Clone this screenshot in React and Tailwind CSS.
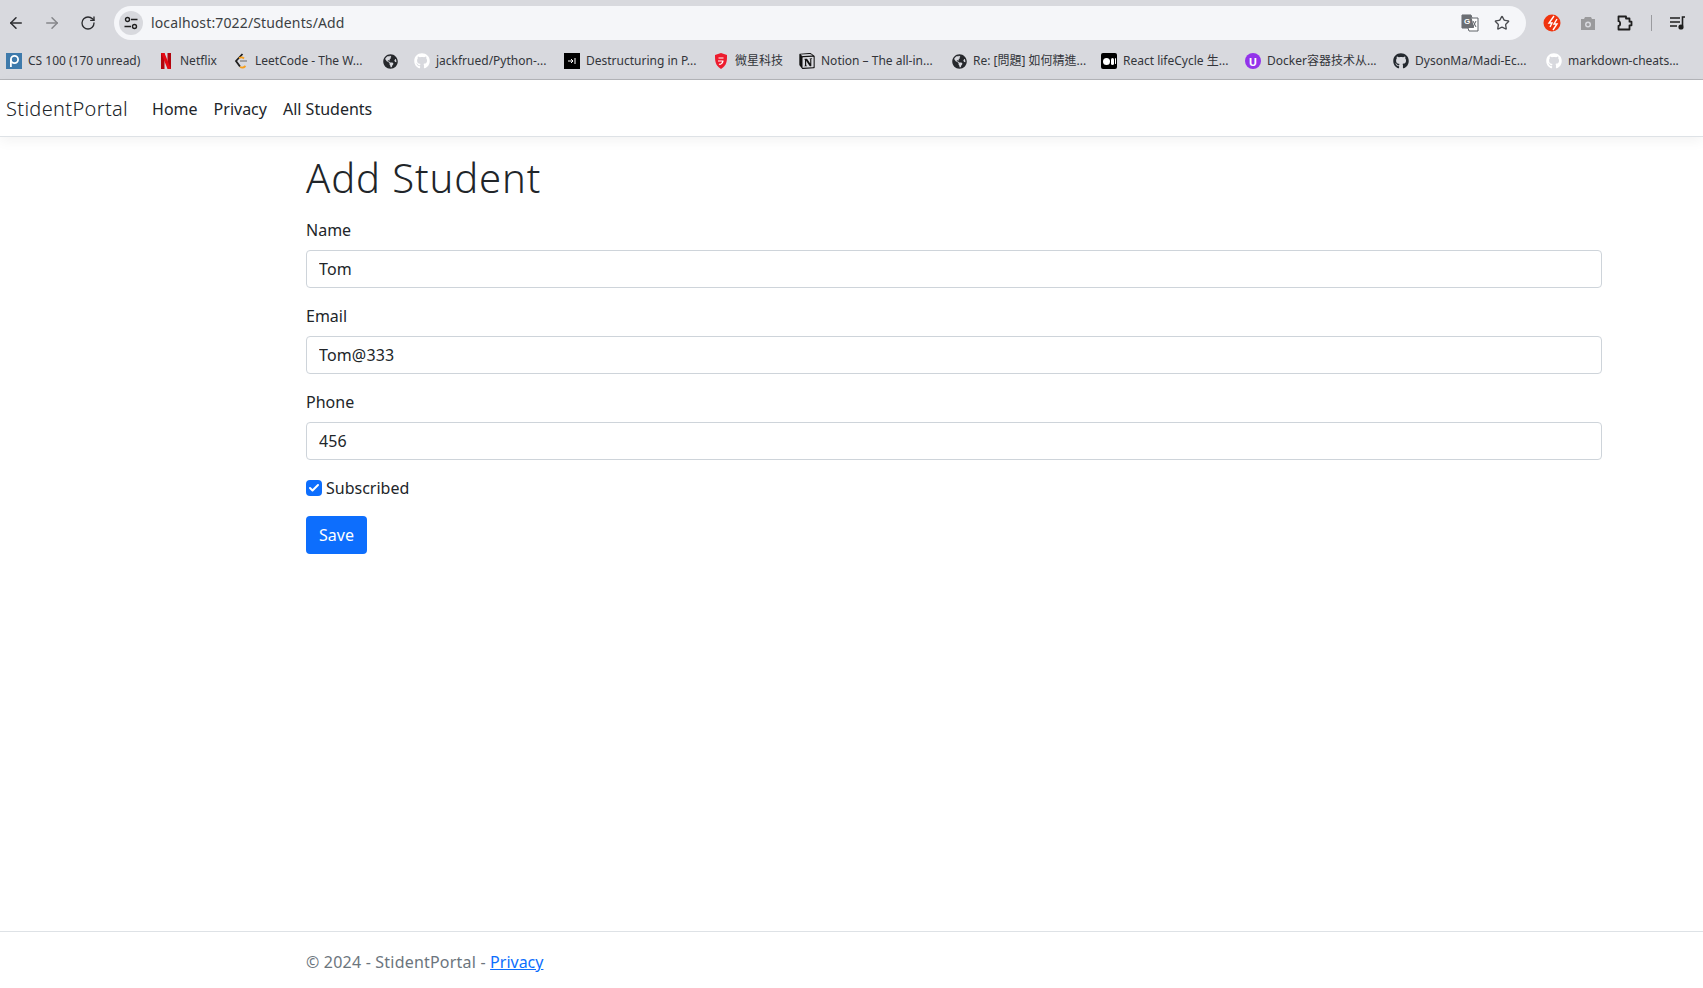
import React from "react";
import { ArrowLeft, ArrowRight, Check, RotateCw, Star } from "lucide-react";
import { FaGithub, FaGlobeAmericas } from "react-icons/fa";
import { SiNotion } from "react-icons/si";

const Tune = () => (
	<svg width="14" height="14" viewBox="0 0 14 14" fill="none" stroke="#1f1f1f" strokeWidth="1.4">
		<circle cx="3.5" cy="3.5" r="2" />
		<path d="M7 3.5h6.5M.5 10.5H7" />
		<circle cx="10.5" cy="10.5" r="2" />
	</svg>
);

const Translate = () => (
	<svg width="18" height="18" viewBox="0 0 18 18">
		<path d="M1 1h9l1 3h6v13H8l-1-3H1z" fill="#fff" stroke="#5f6368" />
		<path d="M1 1h9l3 13H1z" fill="#6b6e73" />
		<text x="3" y="10" fontSize="8" fontWeight="700" fill="#fff" fontFamily="Liberation Sans, sans-serif">G</text>
		<path d="M12 7l3 6M15 7l-3 6" stroke="#5f6368" strokeWidth="1" />
	</svg>
);

const Flash = () => (
	<svg width="18" height="18" viewBox="0 0 18 18">
		<circle cx="9" cy="9" r="8.5" fill="#f0340e" />
		<path d="M11 2 6 9h3l-2 4M14 5l-3 5h3l-4 6" fill="none" stroke="#fff" strokeWidth="1.4" />
	</svg>
);

const CameraIcon = () => (
	<svg width="16" height="15" viewBox="0 0 16 15">
		<path d="M1 3h3l1-2h6l1 2h3v11H1z" fill="#9a9a9c" />
		<circle cx="8" cy="8.5" r="3" fill="#d8d9de" />
		<circle cx="8" cy="8.5" r="1.5" fill="#9a9a9c" />
	</svg>
);

const Extension = () => (
	<svg width="18" height="18" viewBox="0 0 18 18" fill="none" stroke="#1f1f1f" strokeWidth="1.8" strokeLinejoin="round">
		<path d="M2.500 2.500H10v2h3.500v3.200h2v3.600h-2V15.500H2.500v-3.700c2.200 0 2.200-4.600 0-4.600z" />
	</svg>
);

const Media = () => (
	<svg width="16" height="14" viewBox="0 0 16 14" fill="none" stroke="#1f1f1f" strokeWidth="1.6">
		<path d="M0 2h10M0 6h10M0 10h7M15 1h-2.5v9" />
		<circle cx="11" cy="11" r="1.8" fill="#1f1f1f" />
	</svg>
);

const Piazza = () => (
	<svg width="16" height="16" viewBox="0 0 16 16">
		<rect width="16" height="16" fill="#3e7aab" />
		<circle cx="8.500" cy="6.500" r="3.600" fill="none" stroke="#fff" strokeWidth="1.800" />
		<path d="M4.900 6.500V14" stroke="#fff" strokeWidth="1.800" />
	</svg>
);

const Netflix = () => (
	<svg width="16" height="16" viewBox="0 0 16 16">
		<path d="M3 0h3.5v16L3 16z" fill="#b1060f" />
		<path d="M9.5 0H13v16l-3.500-.3z" fill="#b1060f" />
		<path d="M3 0h3.500L13 16l-3.500-.3z" fill="#e50914" />
	</svg>
);

const Leetcode = () => (
	<svg width="16" height="16" viewBox="0 0 16 16" fill="none" strokeWidth="1.8">
		<path d="M9.500 1 3 8l4 5.500" stroke="#1f1f1f" />
		<path d="M7 8h7" stroke="#9a9a9c" />
		<path d="M7 14c2 1 4 .5 5.500-1" stroke="#f89f1b" />
		<path d="M6 5c2-1 3.500-1 5 .5" stroke="#f89f1b" />
	</svg>
);

const Vercel = () => (
	<span className="flex h-4 w-4 items-center justify-center bg-black">
		<svg width="8" height="6" viewBox="0 0 8 6" fill="none" stroke="#fff">
			<path d="M0 3h4M3 1l2 2-2 2M7 0v6" />
		</svg>
	</span>
);

const Msi = () => (
	<svg width="16" height="16" viewBox="0 0 16 16">
		<path d="M2 2 8 0l6 2c0 6 0 10-6 14C2 12 2 8 2 2z" fill="#ed1c2e" />
		<path d="M5.500 5h5M5 8h5.500M6 11c2 1 3.500-1 4-3" fill="none" stroke="#fff" strokeWidth="1.200" />
	</svg>
);

const Medium = () => (
	<span className="flex h-4 w-4 items-center justify-center gap-px rounded-[2px] bg-black">
		<span className="h-[7px] w-[7px] rounded-full bg-white" />
		<span className="h-[7px] w-[3px] rounded-full bg-white" />
		<span className="h-[6px] w-px rounded-full bg-white" />
	</span>
);

const Uu = () => (
	<span className="flex h-4 w-4 items-center justify-center rounded-full bg-[#9333ea] text-[11px] font-bold leading-none text-white">U</span>
);

const GithubLight = () => <FaGithub size={16} color="#ffffff" />;
const GithubDark = () => <FaGithub size={16} color="#24292f" />;
const Globe = () => <FaGlobeAmericas size={15} color="#26282c" />;
const NotionIcon = () => <SiNotion size={16} color="#111111" />;

const bookmarks = [
	{ icon: <Piazza />, text: "CS 100 (170 unread)", width: "w-[152px]" },
	{ icon: <Netflix />, text: "Netflix", width: "w-[75px]" },
	{ icon: <Leetcode />, text: "LeetCode - The W...", width: "w-[149px]" },
	{ icon: <Globe />, text: "", width: "w-[32px]" },
	{ icon: <GithubLight />, text: "jackfrued/Python-...", width: "w-[150px]" },
	{ icon: <Vercel />, text: "Destructuring in P...", width: "w-[149px]" },
	{ icon: <Msi />, text: "微星科技", width: "w-[86px]" },
	{ icon: <NotionIcon />, text: "Notion – The all-in...", width: "w-[152px]" },
	{ icon: <Globe />, text: "Re: [問題] 如何精進...", width: "w-[150px]" },
	{ icon: <Medium />, text: "React lifeCycle 生...", width: "w-[144px]" },
	{ icon: <Uu />, text: "Docker容器技术从...", width: "w-[148px]" },
	{ icon: <GithubDark />, text: "DysonMa/Madi-Ec...", width: "w-[153px]" },
	{ icon: <GithubLight />, text: "markdown-cheats...", width: "w-[150px]" },
];

const fields = [
	{ label: "Name", value: "Tom" },
	{ label: "Email", value: "Tom@333" },
	{ label: "Phone", value: "456" },
];

function BrowserBar() {
	return (
		<div className="h-[80px] shrink-0 border-b border-[#b4b5b9] bg-[#d8d9de]">
			<div className="flex h-[46px] items-center">
				<div className="flex w-[114px] items-center pl-[7px]">
					<ArrowLeft size={18} color="#2b2c2f" />
					<ArrowRight size={18} color="#85868a" className="ml-[18px]" />
					<RotateCw size={16} color="#2b2c2f" className="ml-[19px]" />
				</div>
				<div className="flex h-[34px] w-[1412px] items-center rounded-full bg-[#f5f6f9]">
					<span className="ml-[5px] flex h-6 w-6 items-center justify-center rounded-full bg-[#d8d9de]">
						<Tune />
					</span>
					<span className="mb-[2px] ml-[8px] flex-1 text-[14px] tracking-[0.14px] text-[#3c3f43]">localhost:7022/Students/Add</span>
					<Translate />
					<Star size={16} color="#4a4c50" className="ml-[15px] mr-[16px]" strokeWidth={2} />
				</div>
				<div className="flex flex-1 items-center">
					<span className="ml-[17px]"><Flash /></span>
					<span className="ml-[19px]"><CameraIcon /></span>
					<span className="ml-[20px]"><Extension /></span>
					<span className="ml-[17px] h-[16px] w-px bg-[#9a9b9f]" />
					<span className="ml-[18px]"><Media /></span>
				</div>
			</div>
			<div className="flex h-[30px] items-center pl-[6px]">
				{bookmarks.map((b, i) => (
					<div key={i} className={`flex shrink-0 items-center gap-[6px] ${b.width}`}>
						<span className="flex h-4 w-4 shrink-0 items-center justify-center">{b.icon}</span>
						{b.text && <span className="whitespace-nowrap text-[12px] text-[#33353a]">{b.text}</span>}
					</div>
				))}
			</div>
		</div>
	);
}

function Navbar() {
	return (
		<nav className="flex h-[57px] shrink-0 items-center border-b border-[#dee2e6] pl-[6px] pt-[2px] shadow-[0_4px_12px_rgba(0,0,0,0.05)]">
			<a className="text-[20px] font-light tracking-[0.33px] text-[#212529]">StidentPortal</a>
			<a className="ml-[24px] text-[#212529]">Home</a>
			<a className="ml-[16px] text-[#212529]">Privacy</a>
			<a className="ml-[16px] text-[#212529]">All Students</a>
		</nav>
	);
}

export default function App() {
	return (
		<div className="flex min-h-[988px] flex-col bg-white font-['Noto_Sans','Noto_Sans_CJK_TC',sans-serif] text-[16px] text-[#212529]">
			<BrowserBar />
			<Navbar />

			{/* FORM */}
			<main className="ml-[306px] w-[1296px] flex-1 pt-[17px]">
				<h1 className="mb-[16px] text-[40px] font-light leading-[48px] tracking-[0.9px]">Add Student</h1>
				{fields.map((f) => (
					<div key={f.label} className="mb-4">
						<label className="mb-2 block leading-6">{f.label}</label>
						<input
							readOnly
							value={f.value}
							className="block h-[38px] w-full rounded-[4px] border border-[#ced4da] px-3 tracking-[0.15px] outline-none"
						/>
					</div>
				))}
				<div className="mb-4 flex h-6 items-center">
					<span className="flex h-4 w-4 items-center justify-center rounded-[4px] bg-[#0d6efd]">
						<Check size={12} color="#fff" strokeWidth={4} />
					</span>
					<span className="ml-1">Subscribed</span>
				</div>
				<button className="h-[38px] w-[61px] rounded-[4px] bg-[#0d6efd] text-white">Save</button>
			</main>

			{/* FOOTER */}
			<footer className="h-[57px] shrink-0 border-t border-[#dee2e6] pl-[306px] leading-[60px] text-[#6c757d]">
				<span className="tracking-[0.2px]">© 2024 - StidentPortal - </span>
				<a className="text-[#0d6efd] underline">Privacy</a>
			</footer>
		</div>
	);
}
